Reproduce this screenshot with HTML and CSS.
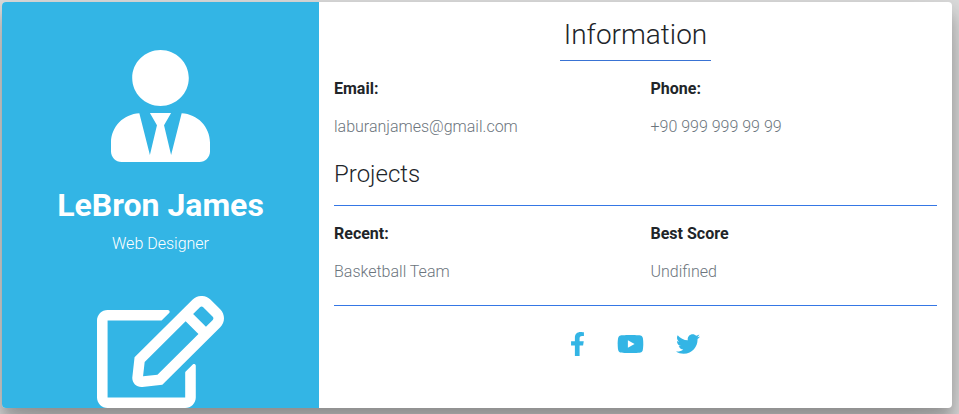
FILE: index.html
```html
<!DOCTYPE html>
<html lang="en">
<head>
<meta charset="utf-8">
<title>Profile</title>
<link rel="stylesheet" href="styles.css">
</head>
<body>
<main class="card">
  <section class="side">
    <svg class="avatar" viewBox="0 0 448 512" preserveAspectRatio="none"><path d="M224 256c70.7 0 128-57.3 128-128S294.7 0 224 0 96 57.3 96 128s57.3 128 128 128zm95.8 32.6L272 480l-32-136 32-56h-96l32 56-32 136-47.8-191.4C56.9 292 0 350.3 0 422.4V464c0 26.5 21.5 48 48 48h352c26.5 0 48-21.5 48-48v-41.6c0-72.1-56.9-130.4-128.2-133.8z"/></svg>
    <h2 class="name">LeBron James</h2>
    <p class="role">Web Designer</p>
    <svg class="edit" viewBox="0 0 576 512" preserveAspectRatio="none"><path d="M402.3 344.9l32-32c5-5 13.7-1.5 13.7 5.7V464c0 26.5-21.5 48-48 48H48c-26.5 0-48-21.5-48-48V112c0-26.5 21.5-48 48-48h273.5c7.1 0 10.7 8.6 5.7 13.7l-32 32c-1.5 1.5-3.5 2.3-5.7 2.3H48v352h352V350.5c0-2.1.8-4.1 2.3-5.6zm156.6-201.8L296.3 405.7l-90.4 10c-26.2 2.9-48.5-19.2-45.6-45.6l10-90.4L432.9 17.1c22.9-22.9 59.9-22.9 82.7 0l43.2 43.2c22.9 22.9 22.9 60 .1 82.8zM460.1 174L402 115.9 216.2 301.8l-7.3 65.3 65.3-7.3L460.1 174zm64.8-79.7l-43.2-43.2c-4.1-4.1-10.8-4.1-14.8 0L436 82l58.1 58.1 30.9-30.9c4-4.2 4-10.8-.1-14.9z"/></svg>
  </section>
  <section class="info">
    <h3 class="title">Information</h3>
    <div class="row">
      <div><p class="label">Email:</p><p class="value">laburanjames@gmail.com</p></div>
      <div><p class="label">Phone:</p><p class="value">+90 999 999 99 99</p></div>
    </div>
    <h4 class="subtitle">Projects</h4>
    <hr class="rule">
    <div class="row">
      <div><p class="label">Recent:</p><p class="value">Basketball Team</p></div>
      <div><p class="label">Best Score</p><p class="value">Undifined</p></div>
    </div>
    <hr class="rule">
    <div class="social">
      <svg class="fb" viewBox="0 0 320 512"><path d="M279.14 288l14.22-92.66h-88.91v-60.13c0-25.35 12.42-50.06 52.24-50.06h40.42V6.26S260.43 0 225.36 0c-73.22 0-121.08 44.38-121.08 124.72v70.62H22.89V288h81.39v224h100.17V288z"/></svg>
      <svg class="yt" viewBox="0 0 576 512"><path d="M549.655 124.083c-6.281-23.65-24.787-42.276-48.284-48.597C458.781 64 288 64 288 64S117.22 64 74.629 75.486c-23.497 6.322-42.003 24.947-48.284 48.597-11.412 42.867-11.412 132.305-11.412 132.305s0 89.438 11.412 132.305c6.281 23.65 24.787 41.5 48.284 47.821C117.22 448 288 448 288 448s170.78 0 213.371-11.486c23.497-6.321 42.003-24.171 48.284-47.821 11.412-42.867 11.412-132.305 11.412-132.305s0-89.438-11.412-132.305zm-317.51 213.508V175.185l142.739 81.205-142.739 81.201z"/></svg>
      <svg class="tw" viewBox="0 0 512 512"><path d="M459.37 151.716c.325 4.548.325 9.097.325 13.645 0 138.72-105.583 298.558-298.558 298.558-59.452 0-114.68-17.219-161.137-47.106 8.447.974 16.568 1.299 25.34 1.299 49.055 0 94.213-16.568 130.274-44.832-46.132-.975-84.792-31.188-98.112-72.772 6.498.974 12.995 1.624 19.818 1.624 9.421 0 18.843-1.3 27.614-3.573-48.081-9.747-84.143-51.98-84.143-102.985v-1.299c13.969 7.797 30.214 12.67 47.431 13.319-28.264-18.843-46.781-51.005-46.781-87.391 0-19.492 5.197-37.36 14.294-52.954 51.655 63.675 129.3 105.258 216.365 109.807-1.624-7.797-2.599-15.918-2.599-24.04 0-57.828 46.782-104.934 104.934-104.934 30.213 0 57.502 12.67 76.67 33.137 23.715-4.548 46.456-13.32 66.599-25.34-7.798 24.366-24.366 44.833-46.132 57.827 21.117-2.273 41.584-8.122 60.426-16.243-14.292 20.791-32.161 39.308-52.628 54.253z"/></svg>
    </div>
  </section>
</main>
</body>
</html>
```
FILE: styles.css
```css
* { box-sizing: border-box; }
body {
  margin: 0;
  height: 414px;
  overflow: hidden;
  padding: 2px;
  background: #dcdcdc;
  font: 300 16px/24px Roboto, sans-serif;
  color: #212529;
}
h2, h3, h4, p { margin: 0; }
.card {
  display: flex;
  width: 950px;
  height: 406px;
  border-radius: 4px;
  background: #fff;
  box-shadow: 0 12px 15px rgba(0, 0, 0, .24), 0 17px 50px rgba(0, 0, 0, .19);
}
.side {
  display: flex;
  flex-direction: column;
  align-items: center;
  width: 317px;
  padding-top: 48px;
  border-radius: 4px 0 0 4px;
  background: #33b5e5;
  color: #fff;
}
svg { display: block; fill: currentColor; }
.avatar { width: 99px; height: 112px; }
.name { margin-top: 24px; font-size: 32px; line-height: 38px; font-weight: 700; }
.role { margin-top: 8px; }
.edit { width: 127px; height: 112px; margin-top: 40px; }
.info { flex: 1; padding: 12px 15px 0; }
.title {
  width: 151px;
  height: 47px;
  margin: 0 auto;
  border-bottom: 1px solid #3973d4;
  font-size: 28px;
  line-height: 42px;
  font-weight: 300;
  text-align: center;
}
.row { display: grid; grid-template-columns: 316.5px 1fr; }
.label { margin-top: 16px; font-weight: 700; }
.value { margin-top: 14px; color: #6c757d; }
.subtitle { margin-top: 21px; font-size: 24px; line-height: 29px; font-weight: 300; }
.rule { height: 1px; margin: 16px 0 0; border: 0; background: #3577e5; }
.rule + .row + .rule { margin-top: 21px; }
.social { display: flex; justify-content: center; gap: 32px; margin: 26px 1px 0 0; color: #33b5e5; }
.fb { width: 15px; height: 24px; }
.yt { width: 27px; height: 24px; }
.tw { width: 24px; height: 24px; }
```
